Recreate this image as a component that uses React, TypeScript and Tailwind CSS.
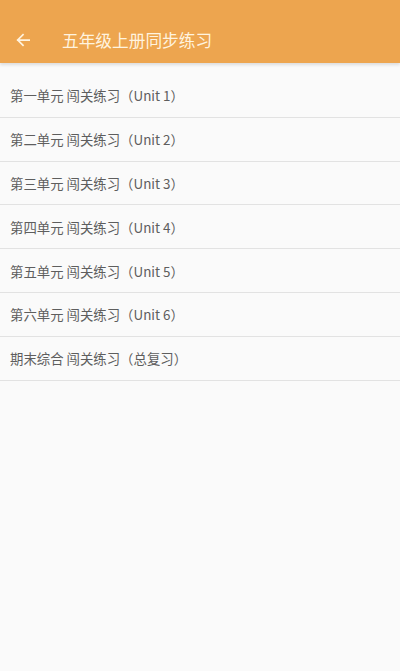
import React from "react";

const items = [
  "第一单元 闯关练习（Unit 1）",
  "第二单元 闯关练习（Unit 2）",
  "第三单元 闯关练习（Unit 3）",
  "第四单元 闯关练习（Unit 4）",
  "第五单元 闯关练习（Unit 5）",
  "第六单元 闯关练习（Unit 6）",
  "期末综合 闯关练习（总复习）",
];

export default function App() {
  return (
    <div
      className="w-[400px] h-[671px] bg-[#fafafa] flex flex-col overflow-hidden"
      style={{ fontFamily: '"Noto Sans CJK SC", "Noto Sans", sans-serif' }}
    >
      <div className="h-[63px] bg-[#eda54f] flex items-end pb-[11px] shadow-[0_2px_3px_rgba(0,0,0,0.12)] relative z-10">
        <div className="w-[62px] flex items-center pl-[16px] h-[24px]">
          <svg width="14" height="14" viewBox="0 0 16 16" fill="none">
            <path d="M15 8H2M8 2L2 8l6 6" stroke="#fff3df" strokeWidth="2" strokeLinecap="square" />
          </svg>
        </div>
        <div className="text-[16.7px] leading-[24px] text-[#fff3df]">五年级上册同步练习</div>
      </div>
      <div className="pt-[11px] flex flex-col">
        {items.map((t) => (
          <div
            key={t}
            className="h-[43.8px] border-b border-[#e2e2e2] flex items-center pl-[10px] text-[13.4px] text-[#5e5e5e]"
          >
            {t}
          </div>
        ))}
      </div>
    </div>
  );
}
